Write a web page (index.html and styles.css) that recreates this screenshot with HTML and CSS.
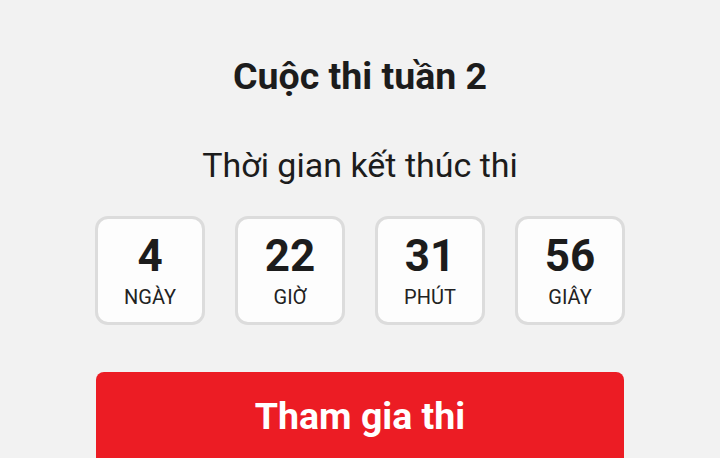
FILE: index.html
```html
<!DOCTYPE html>
<html lang="vi">
<head>
<meta charset="utf-8">
<link rel="stylesheet" href="styles.css">
</head>
<body>
<main class="page">
  <h1 class="title">Cuộc thi tuần 2</h1>
  <p class="subtitle">Thời gian kết thúc thi</p>
  <div class="countdown">
    <div class="unit"><span class="num">4</span><span class="label">NGÀY</span></div>
    <div class="unit"><span class="num">22</span><span class="label">GIỜ</span></div>
    <div class="unit"><span class="num">31</span><span class="label">PHÚT</span></div>
    <div class="unit"><span class="num">56</span><span class="label">GIÂY</span></div>
  </div>
  <button class="join">Tham gia thi</button>
</main>
</body>
</html>
```
FILE: styles.css
```css
html, body {
  margin: 0;
  padding: 0;
  background: #f2f2f2;
  height: 100%;
  overflow: hidden;
}
.page {
  font-family: Roboto, "Noto Sans", sans-serif;
  color: #1c1c1c;
  display: flex;
  flex-direction: column;
  align-items: center;
  padding-top: 52px;
}
.title {
  margin: 0;
  font-size: 37.5px;
  font-weight: 700;
  line-height: 48px;
}
.subtitle {
  margin: 43px 0 0;
  font-size: 34px;
  font-weight: 400;
  line-height: 44px;
}
.countdown {
  display: flex;
  gap: 30px;
  margin-top: 29px;
}
.unit {
  width: 104px;
  height: 103px;
  border: 3px solid #dcdcdc;
  border-radius: 13px;
  background: #fdfdfd;
  display: flex;
  flex-direction: column;
  align-items: center;
}
.num {
  font-size: 44px;
  font-weight: 700;
  line-height: 44px;
  margin-top: 15px;
}
.label {
  font-size: 20px;
  line-height: 24px;
  margin-top: 7px;
  color: #222;
}
.join {
  margin-top: 47px;
  width: 528px;
  height: 96px;
  border: none;
  border-radius: 8px;
  background: #ec1c24;
  color: #fff;
  font-family: Roboto, "Noto Sans", sans-serif;
  font-size: 37.5px;
  font-weight: 700;
  line-height: 68px;
  display: flex;
  justify-content: center;
  padding: 10px 0 18px;
}
```
